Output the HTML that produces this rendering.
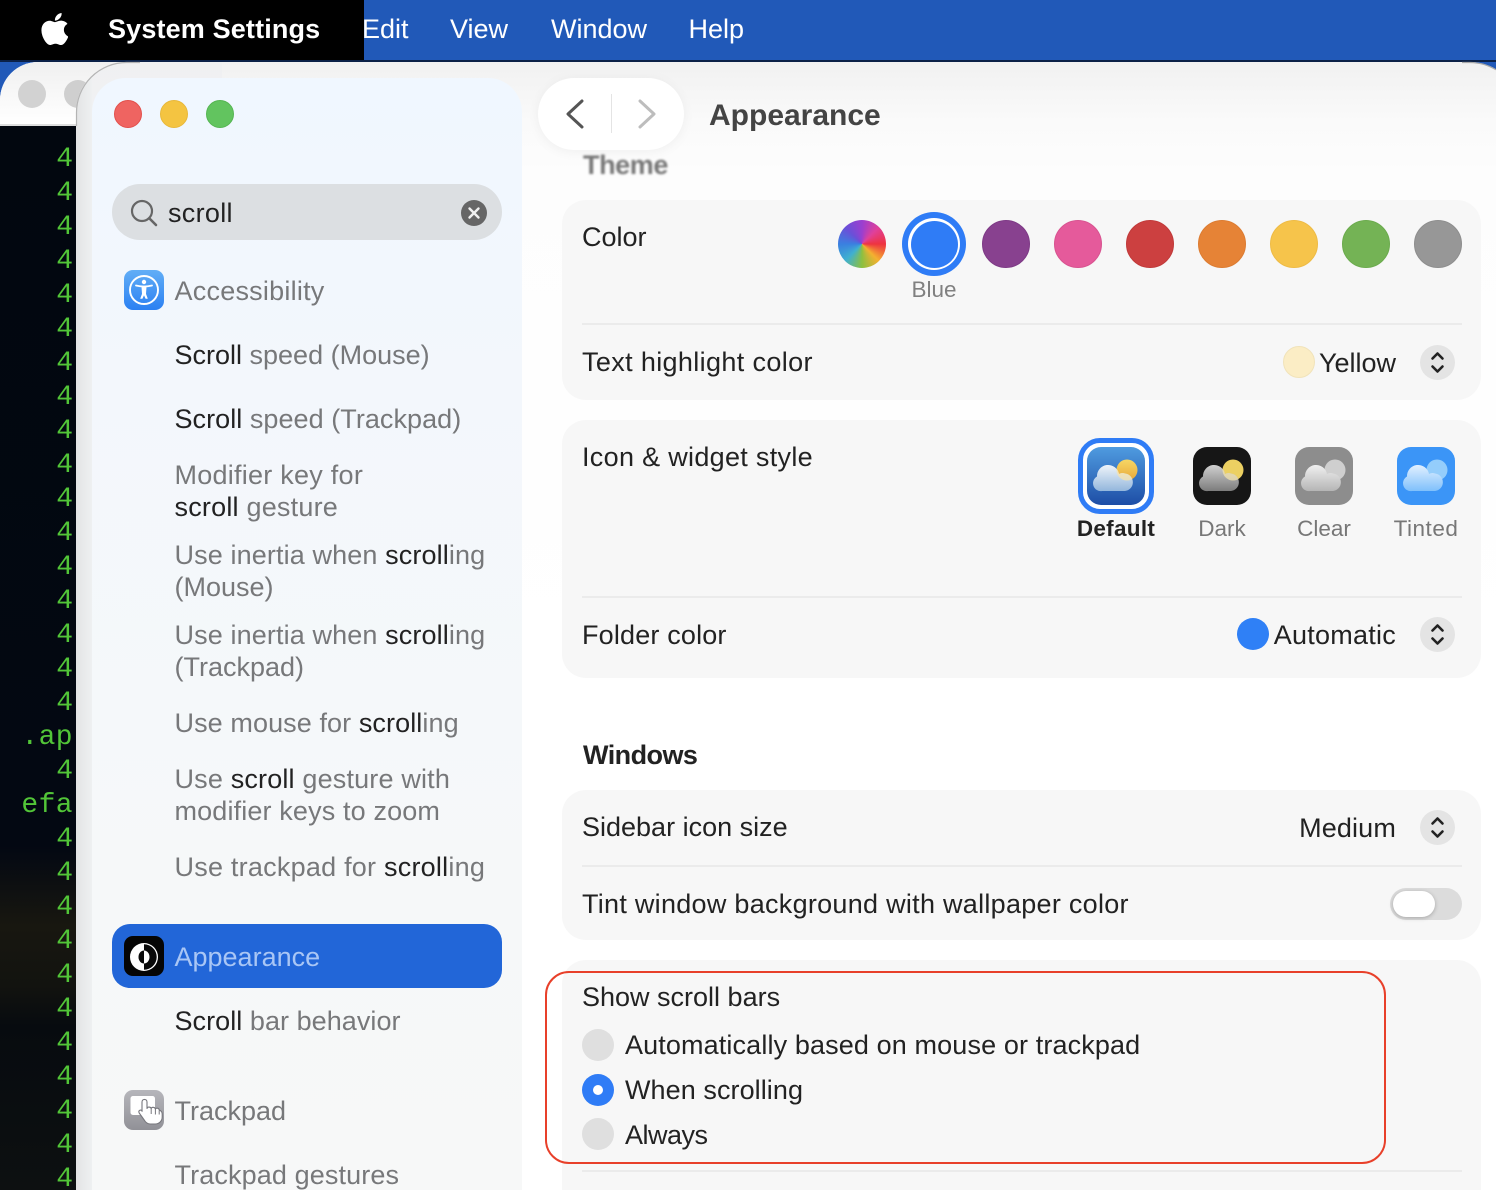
<!DOCTYPE html>
<html lang="en"><head><meta charset="utf-8"><title>System Settings</title>
<style>
html,body{margin:0;padding:0;width:1496px;height:1190px;overflow:hidden;background:#2159b8}
body{position:relative;font-family:"Liberation Sans",sans-serif;font-size:27px;color:#222}
#root{position:absolute;left:0;top:0;width:1496px;height:1190px;overflow:hidden}
div,svg{position:absolute}
.t{position:absolute;white-space:nowrap;line-height:32px;height:32px}
.g{color:#77787a}
.k{color:#222}
.r{text-align:right}
.card{left:562px;width:919px;background:#f7f7f7;border-radius:24px}
.hr{left:582px;width:880px;height:2px;background:#ebebeb}
.dot{width:48px;height:48px;border-radius:50%;top:220px;box-sizing:border-box}
.step{left:1420px;width:35px;height:35px;border-radius:50%;background:#e4e4e4}
.cap{font-size:22.5px;color:#777;text-align:center;top:513px}
.radio{left:582px;width:32px;height:32px;border-radius:50%;background:#dfdfdf}
.n{position:absolute;right:0;white-space:pre;font-family:"Liberation Mono",monospace;font-size:28px;line-height:34px;color:#52c538}
.m{letter-spacing:.4px}
.ic{border-radius:14px;overflow:hidden;top:447px;width:58px;height:58px}
</style></head><body><div id="root">

<!-- menu bar -->
<div style="left:0;top:0;width:1496px;height:60px;background:#2159b8"></div>
<div style="left:0;top:0;width:364px;height:60px;background:#000"></div>
<div style="left:0;top:60px;width:1496px;height:2px;background:#0b2148"></div>
<svg style="left:41px;top:13px" width="27" height="32" viewBox="4 32 366 448"><path fill="#fff" d="M318.7 268.7c-.2-36.7 16.4-64.4 50-84.8-18.8-26.9-47.2-41.7-84.7-44.6-35.5-2.8-74.3 20.7-88.5 20.7-15 0-49.4-19.7-76.4-19.7C63.3 141.2 4 184.8 4 273.5q0 39.3 14.4 81.2c12.8 36.7 59 126.7 107.2 125.2 25.2-.6 43-17.9 75.8-17.9 31.8 0 48.3 17.9 76.4 17.9 48.6-.7 90.4-82.5 102.6-119.3-65.2-30.7-61.7-90-61.7-91.9zm-56.6-164.2c27.3-32.4 24.8-61.9 24-72.5-24.1 1.4-52 16.4-67.9 34.9-17.5 19.8-27.8 44.3-25.6 71.9 26.1 2 49.9-11.4 69.5-34.3z"/></svg>
<span class="t" style="left:108px;top:13px;color:#fff;font-weight:bold;letter-spacing:.15px">System Settings</span>
<span class="t" style="left:362px;top:13px;color:#fff">Edit</span>
<span class="t" style="left:450px;top:13px;color:#fff">View</span>
<span class="t" style="left:551px;top:13px;color:#fff">Window</span>
<span class="t" style="left:688.5px;top:13px;color:#fff">Help</span>

<!-- back window / terminal -->
<div style="left:0;top:62px;width:200px;height:1128px;background:#fff;border-top-left-radius:38px;overflow:hidden">
  <div style="left:0;top:0;width:200px;height:62px;background:linear-gradient(#f0f0f0,#fff)"></div>
  <div style="left:0;top:62px;width:200px;height:2px;background:#dedede"></div>
  <div style="left:18px;top:18px;width:28px;height:28px;border-radius:50%;background:#d2d2d2"></div>
  <div style="left:64px;top:18px;width:28px;height:28px;border-radius:50%;background:#cfcfcf"></div>
  <div style="left:0;top:64px;width:200px;height:1064px;background:linear-gradient(#02070f 0,#030812 720px,#181710 800px,#12130f 860px,#070b0f 900px,#0d1011 1064px)"></div>
</div>
<div style="left:0;top:143px;width:73px;height:1047px;overflow:hidden">
<span class="n" style="top:0">4</span><span class="n" style="top:34px">4</span><span class="n" style="top:68px">4</span><span class="n" style="top:102px">4</span><span class="n" style="top:136px">4</span><span class="n" style="top:170px">4</span><span class="n" style="top:204px">4</span><span class="n" style="top:238px">4</span><span class="n" style="top:272px">4</span><span class="n" style="top:306px">4</span><span class="n" style="top:340px">4</span><span class="n" style="top:374px">4</span><span class="n" style="top:408px">4</span><span class="n" style="top:442px">4</span><span class="n" style="top:476px">4</span><span class="n" style="top:510px">4</span><span class="n" style="top:544px">4</span><span class="n m" style="top:578px">.ap</span><span class="n" style="top:612px">4</span><span class="n m" style="top:646px">efa</span><span class="n" style="top:680px">4</span><span class="n" style="top:714px">4</span><span class="n" style="top:748px">4</span><span class="n" style="top:782px">4</span><span class="n" style="top:816px">4</span><span class="n" style="top:850px">4</span><span class="n" style="top:884px">4</span><span class="n" style="top:918px">4</span><span class="n" style="top:952px">4</span><span class="n" style="top:986px">4</span><span class="n" style="top:1020px">4</span>
</div>

<!-- front window -->
<div style="left:76px;top:62px;width:1444px;height:1128px;border-radius:50px 50px 0 0;overflow:hidden;background:linear-gradient(#f1f1f1 0,#fafafa 60px,#fdfdfd 110px,#fff 600px)">
  <div style="left:0;top:0;width:16px;height:1128px;background:linear-gradient(90deg,#e3e4e5,#eef0f1)"></div>
  <div style="left:16px;top:0;width:130px;height:60px;background:linear-gradient(#eff0f1,#f1f2f4)"></div>
</div>
<svg style="left:70px;top:58px" width="80" height="80" viewBox="70 58 80 80"><path d="M76.500 126V112.500A50 50 0 0 1 126.500 62.500H140" fill="none" stroke="#b4b4b4" stroke-width="1.200"/></svg>
<svg style="left:1460px;top:60px" width="36" height="14" viewBox="1460 60 36 14"><path d="M1462 62.500H1470A50 50 0 0 1 1496 69.800" fill="none" stroke="#a9a9a9" stroke-width="1.200"/></svg>

<!-- sidebar -->
<div style="left:92px;top:78px;width:430px;height:1112px;border-radius:34px 34px 0 0;background:linear-gradient(#f0f7ff 0,#f3f7fc 300px,#f6f8f9 800px,#f7f8f8 100%)"></div>
<div style="left:114px;top:100px;width:28px;height:28px;border-radius:50%;background:#ef6461;box-sizing:border-box;border:1px solid #e2504c"></div>
<div style="left:160px;top:100px;width:28px;height:28px;border-radius:50%;background:#f4c441;box-sizing:border-box;border:1px solid #e8b83a"></div>
<div style="left:206px;top:100px;width:28px;height:28px;border-radius:50%;background:#62c45f;box-sizing:border-box;border:1px solid #55b552"></div>

<div style="left:112px;top:184px;width:390px;height:56px;border-radius:28px;background:#dcdfe2"></div>
<svg style="left:128px;top:197px" width="32" height="32" viewBox="0 0 32 32"><circle cx="14" cy="14" r="10" fill="none" stroke="#666" stroke-width="2.2"/><path d="M21.5 21.5L28 28" stroke="#666" stroke-width="2.6" stroke-linecap="round"/></svg>
<span class="t k" style="left:168px;top:197px;letter-spacing:.3px">scroll</span>
<svg style="left:461px;top:200px" width="26" height="26" viewBox="0 0 26 26"><circle cx="13" cy="13" r="13" fill="#666"/><path d="M8.5 8.5l9 9M17.5 8.5l-9 9" stroke="#f0f0f0" stroke-width="2.4" stroke-linecap="round"/></svg>

<svg style="left:124px;top:270px" width="40" height="40" viewBox="0 0 40 40"><defs><linearGradient id="ab" x1="0" y1="0" x2="0" y2="1"><stop offset="0" stop-color="#62aef6"/><stop offset="1" stop-color="#2b80f2"/></linearGradient></defs><rect width="40" height="40" rx="9" fill="url(#ab)"/><circle cx="20" cy="20" r="14" fill="none" stroke="#fff" stroke-width="1.900"/><circle cx="20" cy="12" r="2.200" fill="#fff"/><path d="M12 15.500Q20 17.500 28 15.500" fill="none" stroke="#fff" stroke-width="1.800" stroke-linecap="round"/><path d="M17.800 16.500h4.400l-.5 7.500 1.700 4.500h-1.600L20 24.500 18.200 28.500h-1.600l1.700-4.500z" fill="#fff" stroke="#fff" stroke-width=".6" stroke-linejoin="round"/></svg>

<span class="t g" style="left:174.5px;top:275px;letter-spacing:.23px">Accessibility</span>
<span class="t g" style="left:174.5px;top:339px"><span class="k">Scroll</span> speed (Mouse)</span>
<span class="t g" style="left:174.5px;top:403px;letter-spacing:.05px"><span class="k">Scroll</span> speed (Trackpad)</span>
<span class="t g" style="left:174.5px;top:459px;letter-spacing:.25px">Modifier key for</span>
<span class="t g" style="left:174.5px;top:491px;letter-spacing:.21px"><span class="k">scroll</span> gesture</span>
<span class="t g" style="left:174.5px;top:539px;letter-spacing:.12px">Use inertia when <span class="k">scroll</span>ing</span>
<span class="t g" style="left:174.5px;top:571px">(Mouse)</span>
<span class="t g" style="left:174.5px;top:619px;letter-spacing:.12px">Use inertia when <span class="k">scroll</span>ing</span>
<span class="t g" style="left:174.5px;top:651px">(Trackpad)</span>
<span class="t g" style="left:174.5px;top:707px;letter-spacing:.09px">Use mouse for <span class="k">scroll</span>ing</span>
<span class="t g" style="left:174.5px;top:763px;letter-spacing:.17px">Use <span class="k">scroll</span> gesture with</span>
<span class="t g" style="left:174.5px;top:795px;letter-spacing:.14px">modifier keys to zoom</span>
<span class="t g" style="left:174.5px;top:851px;letter-spacing:.23px">Use trackpad for <span class="k">scroll</span>ing</span>

<div style="left:112px;top:924px;width:390px;height:64px;border-radius:18px;background:#2266d8"></div>
<svg style="left:124px;top:936px" width="40" height="40" viewBox="0 0 40 40"><rect width="40" height="40" rx="9" fill="#050505"/><circle cx="20" cy="21" r="14" fill="#fff"/><path d="M20 8.300a12.700 12.700 0 0 1 0 25.400z" fill="#0a0a0a"/><ellipse cx="20" cy="21" rx="5.500" ry="6.500" fill="#0a0a0a"/><path d="M20 14.500a5.500 6.500 0 0 1 0 13z" fill="#fff"/></svg>
<span class="t" style="left:174.5px;top:941px;color:#a9c6f5">Appearance</span>
<span class="t g" style="left:174.5px;top:1005px;letter-spacing:.05px"><span class="k">Scroll</span> bar behavior</span>

<svg style="left:124px;top:1090px" width="40" height="40" viewBox="0 0 40 40"><defs><linearGradient id="tb" x1="0" y1="0" x2="0" y2="1"><stop offset="0" stop-color="#b6b6bb"/><stop offset="1" stop-color="#919197"/></linearGradient></defs><rect width="40" height="40" rx="9" fill="url(#tb)"/><rect x="6.500" y="6" width="24.500" height="19" rx="2.500" fill="#fff"/><g transform="translate(2 0)"><path d="M16 12c0-3.400 5-3.400 5 0v6.500c.3-2 3.800-2 4.200.2.300-2 3.800-1.800 4.200.5.500-1.600 3.600-1.300 3.800.8 1.500.6 3 1.500 3 4v3c0 4-3 7-7 7h-5c-3 0-4.500-1.500-6-4l-5-7c-1.300-2.500 1.500-3.800 3-2l-.2.300z" fill="#fff" stroke="#77777d" stroke-width="1.100" stroke-linejoin="round"/><path d="M25.200 19v5M29.400 19.500v5M33.200 20.500v4" stroke="#77777d" stroke-width="1" fill="none"/></g></svg>
<span class="t g" style="left:174.5px;top:1095px">Trackpad</span>
<span class="t g" style="left:174.5px;top:1159px;letter-spacing:.12px">Trackpad gestures</span>

<!-- header -->
<div style="left:538px;top:78px;width:146px;height:72px;border-radius:36px;background:#fff;box-shadow:0 2px 12px rgba(0,0,0,.05)"></div>
<div style="left:611px;top:94px;width:1px;height:39px;background:#e4e4e4"></div>
<svg style="left:560px;top:94px" width="100" height="40" viewBox="0 0 100 40"><path d="M22 7L8 20l14 13" fill="none" stroke="#555" stroke-width="3" stroke-linecap="round" stroke-linejoin="round"/><path d="M80 7l14 13-14 13" fill="none" stroke="#bdbdbd" stroke-width="3" stroke-linecap="round" stroke-linejoin="round"/></svg>
<span class="t" style="left:709px;top:100px;font-size:30px;font-weight:bold;color:#444">Appearance</span>
<span class="t" style="left:583px;top:149px;font-weight:bold;color:#777;filter:blur(1px);letter-spacing:-.4px">Theme</span>

<!-- card 1 -->
<div class="card" style="top:200px;height:200px"></div>
<span class="t" style="left:582px;top:221px">Color</span>
<div class="dot" style="left:838px;background:conic-gradient(#9a3fd0,#e0409a 45deg,#ee3340 90deg,#f4b030 135deg,#8cc040 180deg,#40b0d0 225deg,#3a80e0 270deg,#6a50d8 315deg,#9a3fd0)"></div>
<div style="left:902px;top:212px;width:64px;height:64px;border-radius:50%;background:#2f7cf6"></div>
<div style="left:908px;top:218px;width:52px;height:52px;border-radius:50%;background:#fff"></div>
<div style="left:910.5px;top:220.5px;width:47px;height:47px;border-radius:50%;background:#2f7cf6"></div>
<span class="t" style="left:884px;width:100px;top:274px;font-size:22.5px;color:#808080;text-align:center">Blue</span>
<div class="dot" style="left:982px;background:#88418f;border:1px solid #7e3a86"></div>
<div class="dot" style="left:1054px;background:#e55a9b;border:1px solid #d85390"></div>
<div class="dot" style="left:1126px;background:#cc4040;border:1px solid #c03a3a"></div>
<div class="dot" style="left:1198px;background:#e68336;border:1px solid #dc7c32"></div>
<div class="dot" style="left:1270px;background:#f6c44b;border:1px solid #eebb45"></div>
<div class="dot" style="left:1342px;background:#74b355;border:1px solid #6bab4d"></div>
<div class="dot" style="left:1414px;background:#979797;border:1px solid #8e8e8e"></div>
<div class="hr" style="top:323px"></div>
<span class="t" style="left:582px;top:346px;letter-spacing:.36px">Text highlight color</span>
<div style="left:1283px;top:346px;width:32px;height:32px;border-radius:50%;background:#fbedc5;box-sizing:border-box;border:1px solid #f1e3ba"></div>
<span class="t r" style="left:1196px;width:200px;top:347px">Yellow</span>
<div class="step" style="top:345px"></div>
<svg style="left:1420px;top:345px" width="35" height="35" viewBox="0 0 35 35"><path d="M12.500 13.500l5-5 5 5M12.500 21.500l5 5 5-5" fill="none" stroke="#222" stroke-width="2.600" stroke-linecap="round" stroke-linejoin="round"/></svg>

<!-- card 2 -->
<div class="card" style="top:420px;height:258px"></div>
<span class="t" style="left:582px;top:441px;letter-spacing:.31px">Icon &amp; widget style</span>
<div style="left:1078px;top:438px;width:76px;height:76px;border-radius:22px;box-sizing:border-box;border:5.5px solid #2f7cf6;background:#fff"></div>

<svg class="ic" style="left:1087px" viewBox="0 0 58 58"><defs>
<linearGradient id="d1" x1="0" y1="0" x2="0" y2="1"><stop offset="0" stop-color="#4f9be0"/><stop offset="1" stop-color="#1e4ea6"/></linearGradient>
<linearGradient id="c1" x1="0" y1="0" x2="0" y2="1"><stop offset="0" stop-color="#eef4fa"/><stop offset="1" stop-color="#93b6dc"/></linearGradient>
<linearGradient id="c2" x1="0" y1="0" x2="0" y2="1"><stop offset="0" stop-color="#d0d0d0"/><stop offset="1" stop-color="#7c7c7c"/></linearGradient>
<linearGradient id="c3" x1="0" y1="0" x2="0" y2="1"><stop offset="0" stop-color="#f0f0f0"/><stop offset="1" stop-color="#b5b5b5"/></linearGradient>
<linearGradient id="c4" x1="0" y1="0" x2="0" y2="1"><stop offset="0" stop-color="#e2f0ff"/><stop offset="1" stop-color="#7fc0fb"/></linearGradient>
<linearGradient id="s1" x1="0" y1="0" x2="0" y2="1"><stop offset="0" stop-color="#f6d765"/><stop offset="1" stop-color="#e9a93a"/></linearGradient>
<clipPath id="cl"><path d="M15 44H38A8.800 8.800 0 0 0 38 26.500 7.200 7.200 0 0 0 32 27 11.100 11.100 0 0 0 10 29.500 7.800 7.800 0 0 0 15 44z"/></clipPath>
</defs><rect width="58" height="58" fill="url(#d1)"/><circle cx="40" cy="23" r="10.500" fill="url(#s1)"/><path d="M15 44H38A8.800 8.800 0 0 0 38 26.500 7.200 7.200 0 0 0 32 27 11.100 11.100 0 0 0 10 29.500 7.800 7.800 0 0 0 15 44z" fill="url(#c1)"/><circle cx="40" cy="23" r="10.500" fill="#f8e3a8" opacity=".75" clip-path="url(#cl)"/></svg>

<svg class="ic" style="left:1193px" viewBox="0 0 58 58"><rect width="58" height="58" fill="#161616"/><circle cx="40" cy="23" r="10.500" fill="#ecd062"/><path d="M15 44H38A8.800 8.800 0 0 0 38 26.500 7.200 7.200 0 0 0 32 27 11.100 11.100 0 0 0 10 29.500 7.800 7.800 0 0 0 15 44z" fill="url(#c2)"/><circle cx="40" cy="23" r="10.500" fill="#f3e3ad" opacity=".75" clip-path="url(#cl)"/></svg>

<svg class="ic" style="left:1295px" viewBox="0 0 58 58"><rect width="58" height="58" fill="#8d8d8d"/><circle cx="40" cy="23" r="10.500" fill="#cfcfcf"/><path d="M15 44H38A8.800 8.800 0 0 0 38 26.500 7.200 7.200 0 0 0 32 27 11.100 11.100 0 0 0 10 29.500 7.800 7.800 0 0 0 15 44z" fill="url(#c3)"/></svg>

<svg class="ic" style="left:1397px" viewBox="0 0 58 58"><rect width="58" height="58" fill="#3b95f7"/><circle cx="40" cy="23" r="10.500" fill="#94cdfb"/><path d="M15 44H38A8.800 8.800 0 0 0 38 26.500 7.200 7.200 0 0 0 32 27 11.100 11.100 0 0 0 10 29.500 7.800 7.800 0 0 0 15 44z" fill="url(#c4)"/></svg>

<span class="t cap" style="left:1056px;width:120px;font-weight:bold;color:#222;letter-spacing:.3px">Default</span>
<span class="t cap" style="left:1172px;width:100px">Dark</span>
<span class="t cap" style="left:1274px;width:100px">Clear</span>
<span class="t cap" style="left:1376px;width:100px;letter-spacing:.5px">Tinted</span>
<div class="hr" style="top:596px"></div>
<span class="t" style="left:582px;top:619px;letter-spacing:.17px">Folder color</span>
<div style="left:1237px;top:618px;width:32px;height:32px;border-radius:50%;background:#2f80f6"></div>
<span class="t r" style="left:1196px;width:200px;top:619px;letter-spacing:.25px">Automatic</span>
<div class="step" style="top:617px"></div>
<svg style="left:1420px;top:617px" width="35" height="35" viewBox="0 0 35 35"><path d="M12.500 13.500l5-5 5 5M12.500 21.500l5 5 5-5" fill="none" stroke="#222" stroke-width="2.600" stroke-linecap="round" stroke-linejoin="round"/></svg>

<!-- windows -->
<span class="t" style="left:583px;top:739px;font-weight:bold;letter-spacing:-.55px">Windows</span>
<div class="card" style="top:790px;height:150px"></div>
<span class="t" style="left:582px;top:811px">Sidebar icon size</span>
<span class="t r" style="left:1196px;width:200px;top:812px;letter-spacing:.15px">Medium</span>
<div class="step" style="top:810px"></div>
<svg style="left:1420px;top:810px" width="35" height="35" viewBox="0 0 35 35"><path d="M12.500 13.500l5-5 5 5M12.500 21.500l5 5 5-5" fill="none" stroke="#222" stroke-width="2.600" stroke-linecap="round" stroke-linejoin="round"/></svg>
<div class="hr" style="top:865px"></div>
<span class="t" style="left:582px;top:888px;letter-spacing:.28px">Tint window background with wallpaper color</span>
<div style="left:1390px;top:888px;width:72px;height:32px;border-radius:16px;background:#dcdcdc"></div>
<div style="left:1393px;top:891px;width:42px;height:26px;border-radius:13px;background:#fff;box-shadow:0 1px 4px rgba(0,0,0,.25)"></div>

<!-- scroll bars -->
<div class="card" style="top:960px;height:230px;border-radius:24px 24px 0 0"></div>
<span class="t" style="left:582px;top:981px">Show scroll bars</span>
<div class="radio" style="top:1029px"></div>
<span class="t" style="left:625px;top:1029px;letter-spacing:.125px">Automatically based on mouse or trackpad</span>
<div class="radio" style="top:1074px;background:#2f7cf6"></div>
<div style="left:593px;top:1085px;width:10px;height:10px;border-radius:50%;background:#fff"></div>
<span class="t" style="left:625px;top:1074px;letter-spacing:.07px">When scrolling</span>
<div class="radio" style="top:1118px"></div>
<span class="t" style="left:625px;top:1119px;letter-spacing:-.5px">Always</span>
<div class="hr" style="top:1170px"></div>
<div style="left:545px;top:971px;width:841px;height:193px;box-sizing:border-box;border:2px solid #e8402a;border-radius:24px"></div>

</div></body></html>
